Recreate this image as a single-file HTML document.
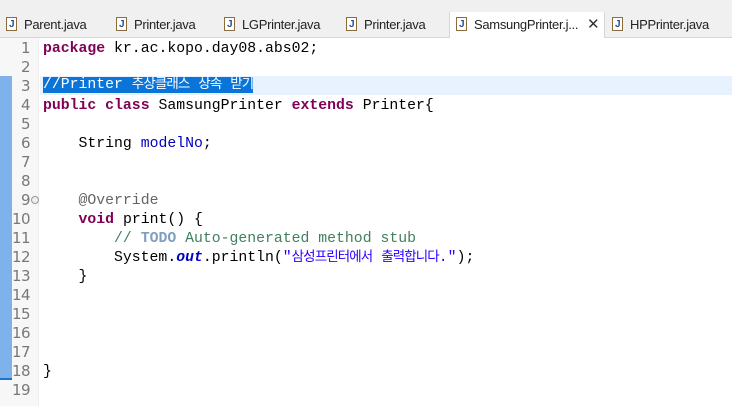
<!DOCTYPE html>
<html><head><meta charset="utf-8"><style>
*{margin:0;padding:0;box-sizing:border-box}
body{width:732px;height:406px;overflow:hidden;background:#fff;font-family:"Liberation Sans","Noto Sans CJK KR",sans-serif;position:relative}
#tb{position:absolute;left:0;top:0;width:732px;height:12px;background:#f0f0f0}
#tabs{position:absolute;left:0;top:12px;width:732px;height:26px;background:#f0f0f0;border-bottom:1px solid #d6d6d6}
.tab{position:absolute;top:0;height:25px;font-size:13px;color:#222;line-height:25px;padding-left:24px;letter-spacing:-0.3px}
.tab i{position:absolute;left:6px;top:5px;width:11px;height:14px;border:1px solid #8a6d3b;background:#fff}
.tab i:after{content:"J";position:absolute;left:2px;top:-6px;font-size:10px;color:#2a4d8f;font-style:normal;font-weight:bold}
.act{background:#fff;height:26px;border-left:1px solid #d6d6d6;border-right:1px solid #d6d6d6}
#gut{position:absolute;left:0;top:38px;width:39px;height:368px;background:#f7f7f7;border-right:1px solid #eee}
#rul{position:absolute;left:0;top:76px;width:12px;height:304px;background:#7fb2ea;border-bottom:2px solid #1a73d0}
.ln{position:absolute;left:12px;width:18px;text-align:right;font-size:15px;color:#787878;font-family:"DejaVu Sans",sans-serif;letter-spacing:-0.5px}
#hl{position:absolute;left:40px;top:76px;width:692px;height:19px;background:#e8f2fe}
.code{position:absolute;left:43px;font-family:"Liberation Mono","Noto Sans CJK KR",monospace;font-size:14.8px;white-space:pre;color:#000;line-height:19px;margin-top:2px}
.k{color:#7f0055;font-weight:bold}
.c{color:#3f7f5f}
.s{color:#2a00ff}
.f{color:#0000c0;font-style:italic;font-weight:bold}
.a{color:#646464}
.t{color:#7f9fbf;font-weight:bold}
.ko{font-size:13.5px;letter-spacing:-0.9px}
.sel{background:#0a74d8;color:#fff}
</style></head><body>
<div id="tb"></div>
<div id="tabs">
<div class="tab" style="left:0;width:103px"><i></i>Parent.java</div>
<div class="tab" style="left:110px;width:115px"><i></i>Printer.java</div>
<div class="tab" style="left:218px;width:115px"><i></i>LGPrinter.java</div>
<div class="tab" style="left:340px;width:110px"><i></i>Printer.java</div>
<div class="tab act" style="left:449px;width:156px"><i></i>SamsungPrinter.j...<span style="position:absolute;left:137px;top:0;font-size:15px;color:#333">✕</span></div>
<div class="tab" style="left:606px;width:126px"><i></i>HPPrinter.java</div>
</div>
<div id="gut"></div>
<div id="rul"></div>
<div id="hl"></div>
<div class="ln" style="top:39px">1</div>
<div class="ln" style="top:58px">2</div>
<div class="ln" style="top:77px">3</div>
<div class="ln" style="top:96px">4</div>
<div class="ln" style="top:115px">5</div>
<div class="ln" style="top:134px">6</div>
<div class="ln" style="top:153px">7</div>
<div class="ln" style="top:172px">8</div>
<div class="ln" style="top:191px">9</div>
<div class="ln" style="top:210px">10</div>
<div class="ln" style="top:229px">11</div>
<div class="ln" style="top:248px">12</div>
<div class="ln" style="top:267px">13</div>
<div class="ln" style="top:286px">14</div>
<div class="ln" style="top:305px">15</div>
<div class="ln" style="top:324px">16</div>
<div class="ln" style="top:343px">17</div>
<div class="ln" style="top:362px">18</div>
<div class="ln" style="top:381px">19</div>
<div style="position:absolute;left:31px;top:196px;width:8px;height:8px;border:1px solid #999;border-radius:50%;background:#eee"></div>
<div class="code" style="top:38px"><span class="k">package</span> kr.ac.kopo.day08.abs02;</div>
<div class="code" style="top:74px"><span class="sel">//Printer <span class="ko">추상클래스</span> <span class="ko">상속</span> <span class="ko">받기</span></span></div>
<div class="code" style="top:95px"><span class="k">public</span> <span class="k">class</span> SamsungPrinter <span class="k">extends</span> Printer{</div>
<div class="code" style="top:133px">    String <span style="color:#0000c0">modelNo</span>;</div>
<div class="code" style="top:190px">    <span class="a">@Override</span></div>
<div class="code" style="top:209px">    <span class="k">void</span> print() {</div>
<div class="code" style="top:228px">        <span class="c">// </span><span class="t">TODO</span><span class="c"> Auto-generated method stub</span></div>
<div class="code" style="top:247px">        System.<span class="f">out</span>.println(<span class="s">"<span class="ko">삼성프린터에서</span> <span class="ko">출력합니다</span>."</span>);</div>
<div class="code" style="top:266px">    }</div>
<div class="code" style="top:361px">}</div>
</body></html>
